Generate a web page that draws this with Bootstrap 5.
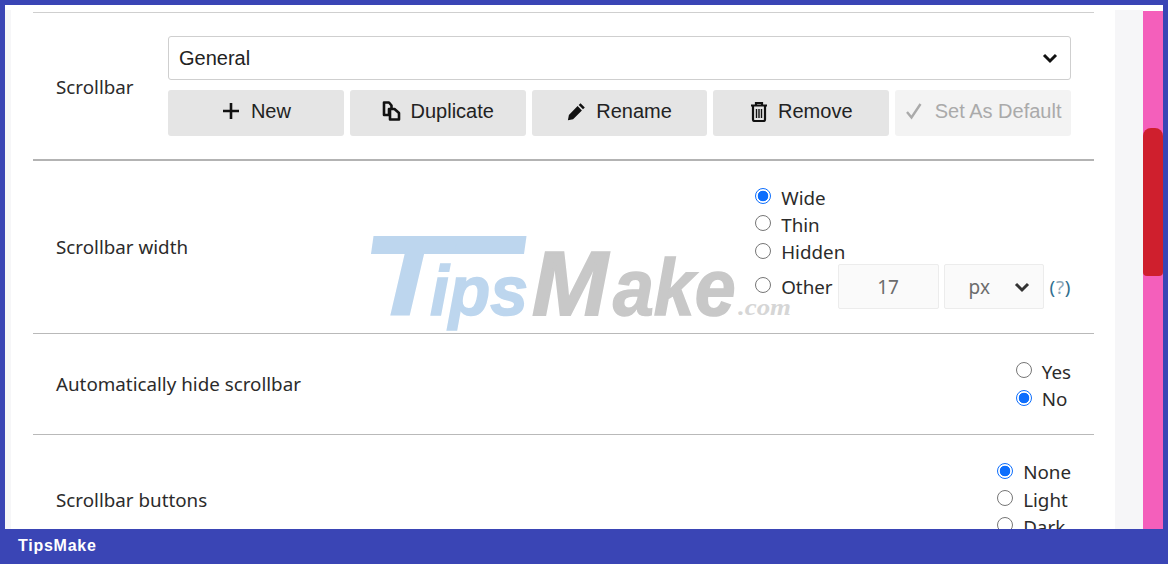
<!DOCTYPE html>
<html lang="en">
<head>
<meta charset="utf-8">
<title>Scrollbar settings</title>
<link href="https://cdn.jsdelivr.net/npm/bootstrap@5.3.0/dist/css/bootstrap.min.css" rel="stylesheet">
<style>
html,body{height:564px;overflow:hidden;background:#fff}
body{font-family:"Noto Sans","Open Sans",sans-serif;font-size:18.8px;color:#2b2b2b}
.frame-top{height:5px;background:#3a45b5;flex:none}
.frame-main{flex:1 1 auto;min-height:0;overflow:hidden}
.frame-side{width:5px;background:#3a45b5;flex:none}
.strip-left{width:6px;background:#f6f6f8;flex:none;margin-top:5px}
.panel{width:1104px;flex:none;position:relative;padding:7px 21px 0 22px}
.gutter{width:28px;flex:none;background:#f6f6f8;margin-top:5px}
.track{width:20px;flex:none;background:#f45fbb;margin-top:6px}
.thumb{height:148px;margin-top:117px;background:#cf1f2d;border-radius:8px 8px 4px 4px}
.frame-foot{height:35px;flex:none;background:#3a45b5;color:#fff;padding-left:18px;font:bold 16px/34px "Liberation Sans",sans-serif;letter-spacing:.75px}
.sect{padding:0 23px;border-bottom:1px solid #b9b9b9}
.sect-a{border-top:1px solid #cfcfcf;border-bottom:2px solid #b3b3b3;padding-top:23px;padding-bottom:23px;height:149px}
.sect-b{height:173px}
.sect-c{height:101px;padding-top:4px}
.sect-c .lbl{margin-top:-3px}
.sect-d{height:130px;border-bottom:0}
.lbl{width:112px;flex:none;white-space:nowrap}
.sect-a .lbl{padding-top:3px}
.ctrl{flex:1 1 auto;min-width:0;gap:10px}
.picker.form-select{height:44px;font:20px "Liberation Sans",sans-serif;color:#222;border-color:#cfcfcf;border-radius:3px;padding:0 10px;background-size:16px 12px;background-position:right 12px center;background-image:url("data:image/svg+xml,%3csvg xmlns='http://www.w3.org/2000/svg' viewBox='0 0 16 12'%3e%3cpath fill='none' stroke='%23111' stroke-width='3' d='M2 3l6 6 6-6'/%3e%3c/svg%3e")}
.acts{gap:6px}
.act.btn{flex:1 1 0;height:46px;padding:0 0 4px;border:0;border-radius:3px;background:#e5e5e5;color:#222;font:20px "Liberation Sans",sans-serif;gap:10px;white-space:nowrap;opacity:1}
.act.btn:disabled{background:#f3f3f3;color:#aaa;opacity:1;gap:12px}
.act svg{flex:none}
.choice{height:27.3px;gap:10px}
.choice .form-check-input{width:16px;height:16px;margin:0 0 4px;flex:none;border-color:#767676;border-width:1.3px;background-color:#fff}
.choice .form-check-input:checked{border-color:#0d6efd;background-color:#fff;background-image:radial-gradient(circle,#0d6efd 0 5px,#fff 5.6px)}
.choice label{line-height:1}
.choice-other{height:45px;margin-top:-2px}
.sizebox.form-control{width:101px;height:45px;margin-left:-5px;border:1px solid #ececec;border-radius:2px;background:#fafafa;color:#6c6c6c;text-align:center;font-size:19px;padding:0}
.unit.form-select{width:100px;height:45px;margin-left:-5px;border:1px solid #ececec;border-radius:2px;background-color:#fafafa;color:#6c6c6c;font-size:19px;padding:0 0 0 24px;background-size:16px 12px;background-position:right 13px center;background-image:url("data:image/svg+xml,%3csvg xmlns='http://www.w3.org/2000/svg' viewBox='0 0 16 12'%3e%3cpath fill='none' stroke='%23333' stroke-width='3' d='M2 3l6 6 6-6'/%3e%3c/svg%3e")}
.hint{margin-left:-4px;color:#2f6f8f;letter-spacing:.65px}
.hint b{font-weight:400;color:#8aa6b8}
.mark-wm{position:absolute;left:349px;top:225px;width:450px;height:100px;pointer-events:none;font-family:"Liberation Sans",sans-serif;font-weight:700;font-style:italic}
.mark-wm span{position:absolute;display:block;line-height:1;transform-origin:0 100%;white-space:nowrap}
.wm-bar{left:11px;top:6px;width:153px;height:18px;background:#bdd6ee;transform:skewX(-8deg)}
.wm-t{left:6px;bottom:-3px;font-size:112px;color:#bdd6ee;transform:scaleX(1.2)}
.wm-ips{left:70px;bottom:4px;font-size:70px;color:#bdd6ee;transform:scaleX(.97);-webkit-text-stroke:1.5px #bdd6ee}
.wm-m{left:172px;bottom:1px;font-size:91px;color:#c8c8c8;-webkit-text-stroke:2px #c8c8c8}
.wm-ake{left:253px;bottom:3px;font-size:79px;color:#c8c8c8;transform:scaleX(.93);-webkit-text-stroke:1.5px #c8c8c8}
.wm-com{left:378px;bottom:11px;font-size:24px;color:#d6d6d6;font-family:"Liberation Serif",serif;transform:scaleX(1.12)}
</style>
</head>
<body class="d-flex flex-column">
<div class="frame-top"></div>
<div class="frame-main d-flex">
  <div class="frame-side"></div>
  <div class="strip-left"></div>
  <main class="panel">
    <div class="mark-wm" aria-hidden="true">
      <span class="wm-bar"></span><span class="wm-t">T</span><span class="wm-ips">ips</span><span class="wm-m">M</span><span class="wm-ake">ake</span><span class="wm-com">.com</span>
    </div>
    <section class="sect sect-a d-flex align-items-center">
      <div class="lbl">Scrollbar</div>
      <div class="ctrl d-flex flex-column">
        <select class="form-select picker" aria-label="Scrollbar"><option>General</option></select>
        <div class="acts d-flex">
          <button type="button" class="btn act d-flex align-items-center justify-content-center">
            <svg width="20" height="20" viewBox="0 0 20 20"><path d="M10 2v16M2 10h16" stroke="#111" stroke-width="2.6" fill="none"/></svg>New</button>
          <button type="button" class="btn act d-flex align-items-center justify-content-center">
            <svg width="19" height="20" viewBox="0 0 19 20"><path d="M2 1.5h5l2.5 3v3.5h-2.5v6h-5zM8 8h4.5l4.5 4v6.5h-9z" fill="#e5e5e5" stroke="#111" stroke-width="2.6" stroke-linejoin="round"/></svg>Duplicate</button>
          <button type="button" class="btn act d-flex align-items-center justify-content-center">
            <svg width="19" height="19" viewBox="0 0 19 19"><path d="M13.5 1.2l4.3 4.3-1.8 1.8-4.3-4.3zM10.6 4.1l4.3 4.3-8.8 8.8-5.2 1 1-5.3z" fill="#111"/></svg>Rename</button>
          <button type="button" class="btn act d-flex align-items-center justify-content-center">
            <svg width="18" height="21" viewBox="0 0 18 21"><path d="M1 4.5h16M6 4.5V2h6v2.5" fill="none" stroke="#111" stroke-width="2.2"/><path d="M3 5v13.5a1.5 1.5 0 0 0 1.5 1.5h9a1.5 1.5 0 0 0 1.5-1.5V5" fill="none" stroke="#111" stroke-width="2.2"/><path d="M6.5 8v9M9 8v9M11.5 8v9" stroke="#111" stroke-width="1.4"/></svg>Remove</button>
          <button type="button" class="btn act d-flex align-items-center justify-content-center" disabled>
            <svg width="18" height="18" viewBox="0 0 18 18"><path d="M2 10l4.5 5.5L15.5 2" fill="none" stroke="#aaa" stroke-width="2.4"/></svg>Set As Default</button>
        </div>
      </div>
    </section>

    <section class="sect sect-b d-flex align-items-center justify-content-between">
      <div class="lbl">Scrollbar width</div>
      <div class="d-flex flex-column">
        <div class="choice d-flex align-items-center"><input class="form-check-input" type="radio" name="sw" id="sw1" checked><label for="sw1">Wide</label></div>
        <div class="choice d-flex align-items-center"><input class="form-check-input" type="radio" name="sw" id="sw2"><label for="sw2">Thin</label></div>
        <div class="choice d-flex align-items-center"><input class="form-check-input" type="radio" name="sw" id="sw3"><label for="sw3">Hidden</label></div>
        <div class="choice choice-other d-flex align-items-center">
          <input class="form-check-input" type="radio" name="sw" id="sw4"><label for="sw4">Other</label>
          <input class="form-control sizebox" type="text" value="17" disabled aria-label="Width">
          <select class="form-select unit" disabled aria-label="Unit"><option>px</option></select>
          <span class="hint">(<b>?</b>)</span>
        </div>
      </div>
    </section>

    <section class="sect sect-c d-flex align-items-center justify-content-between">
      <div class="lbl">Automatically hide scrollbar</div>
      <div class="d-flex flex-column">
        <div class="choice d-flex align-items-center"><input class="form-check-input" type="radio" name="ah" id="ah1"><label for="ah1">Yes</label></div>
        <div class="choice d-flex align-items-center"><input class="form-check-input" type="radio" name="ah" id="ah2" checked><label for="ah2">No</label></div>
      </div>
    </section>

    <section class="sect sect-d d-flex align-items-center justify-content-between">
      <div class="lbl">Scrollbar buttons</div>
      <div class="d-flex flex-column">
        <div class="choice d-flex align-items-center"><input class="form-check-input" type="radio" name="sb" id="sb1" checked><label for="sb1">None</label></div>
        <div class="choice d-flex align-items-center"><input class="form-check-input" type="radio" name="sb" id="sb2"><label for="sb2">Light</label></div>
        <div class="choice d-flex align-items-center"><input class="form-check-input" type="radio" name="sb" id="sb3"><label for="sb3">Dark</label></div>
      </div>
    </section>
  </main>
  <div class="gutter"></div>
  <div class="track"><div class="thumb"></div></div>
  <div class="frame-side"></div>
</div>
<footer class="frame-foot">TipsMake</footer>
<script src="https://cdn.jsdelivr.net/npm/bootstrap@5.3.0/dist/js/bootstrap.bundle.min.js"></script>
</body>
</html>
